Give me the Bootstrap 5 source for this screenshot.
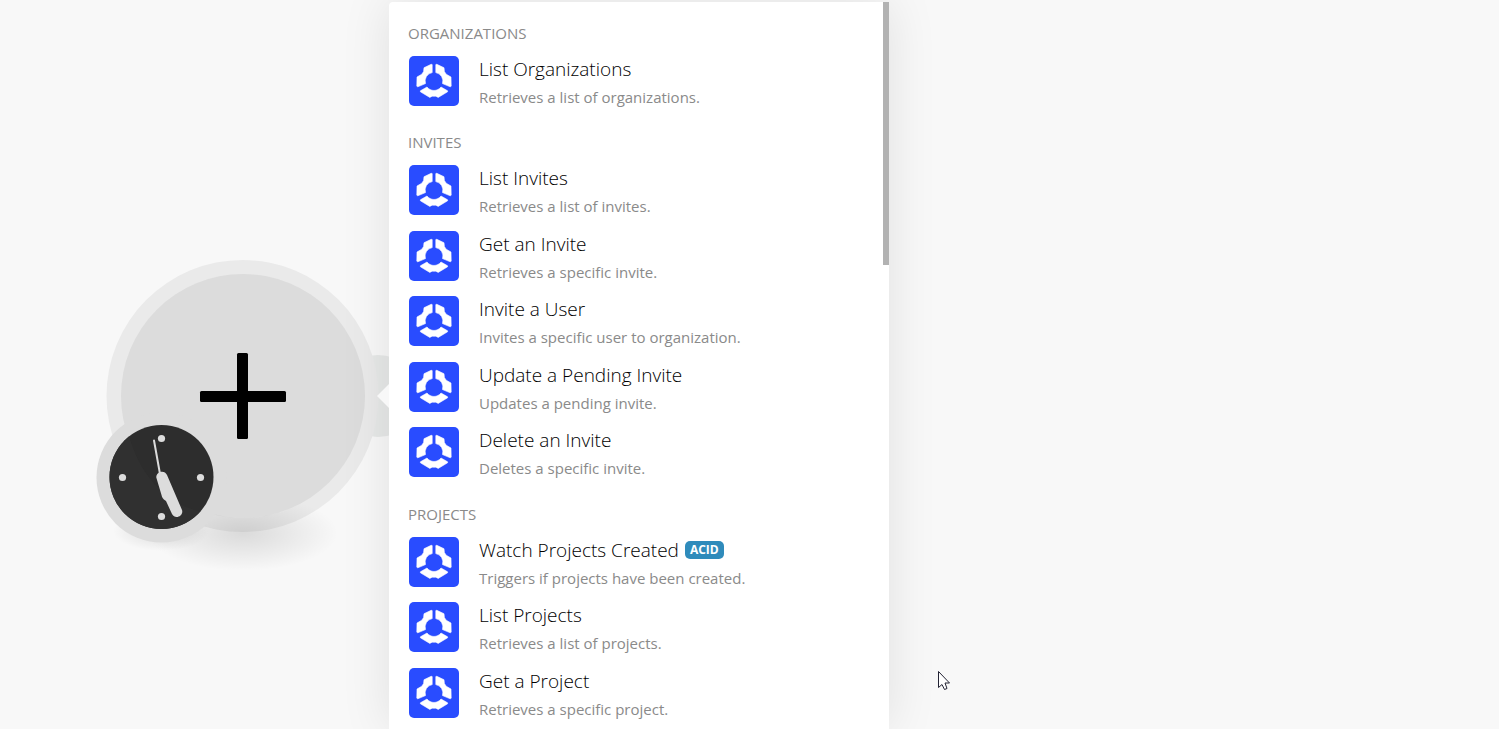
<!DOCTYPE html>
<html lang="en">
<head>
<meta charset="utf-8">
<meta name="viewport" content="width=device-width, initial-scale=1">
<title>Choose a module</title>
<link href="https://cdn.jsdelivr.net/npm/bootstrap@5.3.0/dist/css/bootstrap.min.css" rel="stylesheet">
<style>
  body { background: #f8f8f8; font-family: "Open Sans", "Noto Sans", sans-serif; }
  .stage { height: 100vh; }
  .node-column { width: 389px; }
  .node-art { position: absolute; left: 80px; top: 240px; width: 320px; height: 350px; pointer-events: none; }
  .node-btn { position: absolute; border: 0; background: none; border-radius: 50%; padding: 0; }
  .node-add { left: 106px; top: 260px; width: 272px; height: 272px; }
  .node-clock { left: 97px; top: 413px; width: 129px; height: 129px; }
  .picker { width: 500px; height: calc(100vh - 2px); background: #fff; border-radius: 4px 0 0 0; box-shadow: 0 0 50px rgba(0,0,0,.1); }
  .picker-arrow { position: absolute; left: -12px; top: 382px; width: 12px; height: 24px; background: #f8f8f8; clip-path: polygon(100% 0, 100% 100%, 0 50%); }
  .picker-scroll { height: 100%; overflow: hidden; padding: 16px 20px 0 19px; }
  .picker-thumb { position: absolute; top: 0; right: 0; width: 6px; height: 263px; background: #b2b2b2; }
  .group-name { height: 44px; margin: 0; padding-top: 9px; font-size: 15px; line-height: 24px; font-weight: 400; color: #8a8a8a; }
  .group-name:first-child { height: 38px; padding-top: 3px; }
  .module { height: 66px; border: 0; background: none; padding: 0 0 0 1px; gap: 20px; text-align: left; }
  .module:nth-of-type(odd) { height: 65px; }
  .module-icon { width: 50px; height: 50px; flex: none; }
  .module-title { display: flex; align-items: center; gap: 6px; font-size: 19px; line-height: 26px; font-weight: 300; color: #000; white-space: nowrap; }
  .module-text { font-size: 15px; line-height: 30px; color: #8a8a8a; white-space: nowrap; }
  .acid { font-size: 12px; line-height: 18px; padding: 0 5px; border-radius: 5px; background: #2f8bbb; color: #fff; font-weight: 700; }
  .pointer { position: absolute; left: 937px; top: 670px; width: 14px; height: 22px; }
</style>
</head>
<body>
<svg class="d-none" aria-hidden="true">
  <symbol id="logo" viewBox="0 0 50 50">
    <rect width="50" height="50" rx="5" fill="#294cff"/>
    <g fill="#fff" stroke="#fff" stroke-width=".6" stroke-linejoin="round">
      <path d="M23.2 8.600 22.200 8.300 15 11.700 14.600 15.500 12.800 18.200 8 21 7.800 30.200 8.800 30.800 16.500 27.600 A8.600 8.600 0 0 1 23.200 16.600Z"/>
      <path d="M26.800 8.600 27.800 8.300 35 11.700 35.400 15.500 37.200 18.200 42 21 42.200 30.200 41.200 30.800 33.500 27.600 A8.600 8.600 0 0 0 26.800 16.600Z"/>
      <path d="M18 31 11.400 34.800 11.400 35.800 20.800 41.400 23.200 40.200 26.800 40.200 29.200 41.400 38.600 35.800 38.600 34.800 32 31 A8.800 8.800 0 0 1 18 31Z"/>
    </g>
  </symbol>
</svg>
<main class="stage position-relative d-flex align-items-end overflow-hidden">
  <div class="node-column flex-shrink-0">
    <svg class="node-art" viewBox="80 240 320 350" aria-hidden="true">
      <defs>
        <radialGradient id="floor"><stop offset="0" stop-color="#000" stop-opacity=".12"/><stop offset=".5" stop-color="#000" stop-opacity=".06"/><stop offset="1" stop-color="#000" stop-opacity="0"/></radialGradient>
        <clipPath id="face"><circle cx="161.500" cy="477" r="52"/></clipPath>
        <clipPath id="ground"><path d="M80 240H400V590H80ZM243 274a122 122 0 1 0 1 0Z" clip-rule="evenodd"/></clipPath>
      </defs>
      <circle cx="378" cy="396" r="41" fill="#e7e9e8"/>
      <circle cx="242.500" cy="396" r="136" fill="#eaeaea"/>
      <circle cx="243" cy="396" r="122" fill="#dcdcdc"/>
      <ellipse cx="243" cy="533" rx="95" ry="38" fill="url(#floor)" clip-path="url(#ground)"/>
      <ellipse cx="161" cy="531" rx="48" ry="20" fill="url(#floor)"/>
      <rect x="200" y="391" width="86" height="11" rx="1.500"/>
      <rect x="237" y="353" width="11" height="86" rx="1.500"/>
      <circle cx="161.500" cy="477.500" r="65" fill="#dcdcdc"/>
      <circle cx="161.500" cy="477" r="52" fill="#2d2d2d"/>
      <path d="M90 420H126C133 470 166 507 205 512L190 540H90Z" fill="#303030" clip-path="url(#face)"/>
      <g fill="#dcdcdc">
        <circle cx="161.500" cy="438.500" r="3.600"/><circle cx="161.500" cy="516.500" r="3.600"/>
        <circle cx="122.500" cy="477.500" r="3.600"/><circle cx="200.500" cy="477.500" r="3.600"/>
        <path d="M156.300 477.500C156 471 165 469.500 167 475L182 510C184 516 175 520 172 514L166 501C162.500 499 162 497 161.500 495Z"/>
      </g>
      <path d="M154 440.500 160 474" stroke="#dcdcdc" stroke-width="2" stroke-linecap="round"/>
    </svg>
    <button class="node-btn node-add" type="button" aria-label="Add module"></button>
    <button class="node-btn node-clock" type="button" aria-label="Schedule"></button>
  </div>
  <section class="picker position-relative flex-shrink-0" aria-label="Modules">
    <span class="picker-arrow"></span>
    <div class="picker-scroll d-flex flex-column">
      <h2 class="group-name flex-shrink-0">ORGANIZATIONS</h2>
      <button type="button" class="module d-flex flex-shrink-0 align-items-start"><svg class="module-icon" aria-hidden="true"><use href="#logo"/></svg><span><span class="module-title">List Organizations</span><span class="module-text d-block">Retrieves a list of organizations.</span></span></button>
      <h2 class="group-name flex-shrink-0">INVITES</h2>
      <button type="button" class="module d-flex flex-shrink-0 align-items-start"><svg class="module-icon" aria-hidden="true"><use href="#logo"/></svg><span><span class="module-title">List Invites</span><span class="module-text d-block">Retrieves a list of invites.</span></span></button>
      <button type="button" class="module d-flex flex-shrink-0 align-items-start"><svg class="module-icon" aria-hidden="true"><use href="#logo"/></svg><span><span class="module-title">Get an Invite</span><span class="module-text d-block">Retrieves a specific invite.</span></span></button>
      <button type="button" class="module d-flex flex-shrink-0 align-items-start"><svg class="module-icon" aria-hidden="true"><use href="#logo"/></svg><span><span class="module-title">Invite a User</span><span class="module-text d-block">Invites a specific user to organization.</span></span></button>
      <button type="button" class="module d-flex flex-shrink-0 align-items-start"><svg class="module-icon" aria-hidden="true"><use href="#logo"/></svg><span><span class="module-title">Update a Pending Invite</span><span class="module-text d-block">Updates a pending invite.</span></span></button>
      <button type="button" class="module d-flex flex-shrink-0 align-items-start"><svg class="module-icon" aria-hidden="true"><use href="#logo"/></svg><span><span class="module-title">Delete an Invite</span><span class="module-text d-block">Deletes a specific invite.</span></span></button>
      <h2 class="group-name flex-shrink-0">PROJECTS</h2>
      <button type="button" class="module d-flex flex-shrink-0 align-items-start"><svg class="module-icon" aria-hidden="true"><use href="#logo"/></svg><span><span class="module-title">Watch Projects Created <span class="acid">ACID</span></span><span class="module-text d-block">Triggers if projects have been created.</span></span></button>
      <button type="button" class="module d-flex flex-shrink-0 align-items-start"><svg class="module-icon" aria-hidden="true"><use href="#logo"/></svg><span><span class="module-title">List Projects</span><span class="module-text d-block">Retrieves a list of projects.</span></span></button>
      <button type="button" class="module d-flex flex-shrink-0 align-items-start"><svg class="module-icon" aria-hidden="true"><use href="#logo"/></svg><span><span class="module-title">Get a Project</span><span class="module-text d-block">Retrieves a specific project.</span></span></button>
    </div>
    <span class="picker-thumb"></span>
  </section>
  <svg class="pointer" viewBox="0 0 14 22" aria-hidden="true"><path d="M1.500 1.500V17.500L5 14.500 7.500 19.500 10 18.500 8 13H12.500Z" fill="#fff" stroke="#223" stroke-width="1"/></svg>
</main>
<script src="https://cdn.jsdelivr.net/npm/bootstrap@5.3.0/dist/js/bootstrap.bundle.min.js"></script>
</body>
</html>
